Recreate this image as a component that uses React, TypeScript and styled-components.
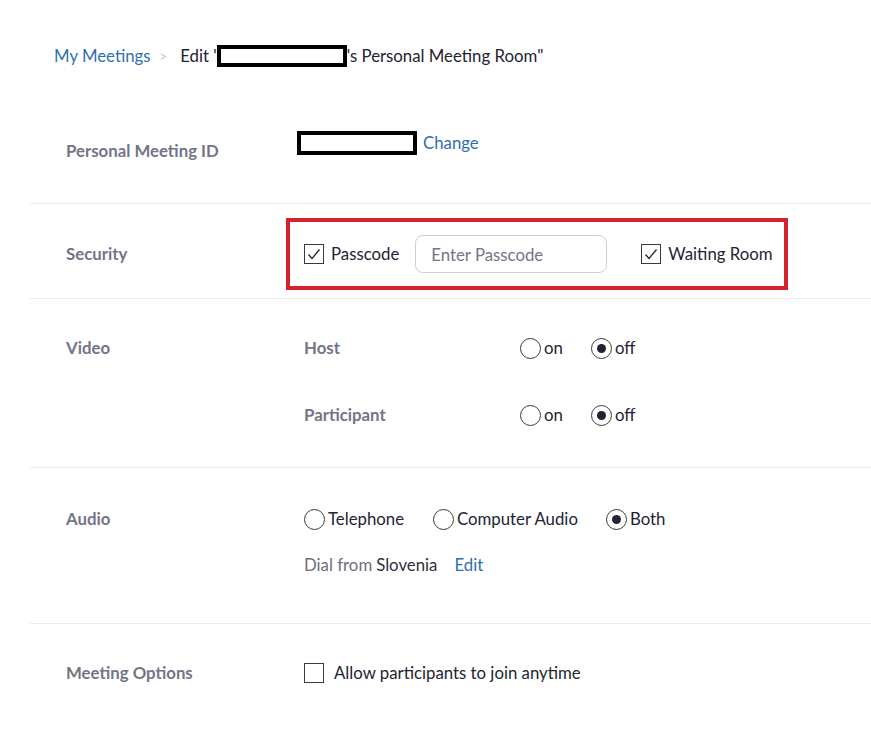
import React from "react";
import styled, { createGlobalStyle, css } from "styled-components";

const GlobalStyle = createGlobalStyle`
  html, body {
    margin: 0;
    padding: 0;
    background: #ffffff;
  }
  body {
    font-family: Lato, "Open Sans", "Liberation Sans", sans-serif;
    font-size: 16.8px;
    line-height: 24px;
    color: #232333;
  }
`;

const Page = styled.div`
  margin-left: 30px;
`;

const Breadcrumb = styled.div`
  display: flex;
  align-items: center;
  padding: 44px 0 32px 24px;
  height: 24px;
  color: #232333;
`;

const Link = styled.a`
  color: #2f6fae;
  text-decoration: none;
  cursor: pointer;
`;

const Crumb = styled.span`
  color: #c4c4cc;
  font-size: 13px;
  margin: 0 13px 0 9px;
`;

const Redacted = styled.span<{ w: number; h: number }>`
  display: inline-block;
  box-sizing: border-box;
  width: ${({ w }) => w}px;
  height: ${({ h }) => h}px;
  border: 4px solid #000;
  background: #fff;
`;

const Section = styled.div<{
  top: number;
  bottom: number;
  first?: boolean;
  center?: boolean;
}>`
  display: grid;
  grid-template-columns: 238px 1fr;
  align-items: ${({ center }) => (center ? "center" : "start")};
  padding: ${({ top, bottom }) => `${top}px 0 ${bottom}px 36px`};
  ${({ first }) =>
    !first &&
    css`
      border-top: 1px solid #ececec;
    `}
`;

const Label = styled.div<{ offset?: number }>`
  font-weight: 700;
  color: #747487;
  margin-top: ${({ offset }) => offset || 0}px;
`;

const Value = styled.div`
  display: flex;
  flex-direction: column;
`;

const Line = styled.div<{ gap?: number }>`
  display: flex;
  align-items: center;
  height: 24px;
  margin-top: ${({ gap }) => gap || 0}px;
`;

const IdLine = styled(Line)`
  margin-left: -7px;
  gap: 6px;
`;

const SecurityBox = styled.div`
  display: flex;
  align-items: center;
  box-sizing: border-box;
  width: 502px;
  height: 72px;
  margin-left: -18px;
  padding: 0 0 0 14px;
  border: 4px solid #d2232f;
`;

const CheckLabel = styled.label<{ gap?: number }>`
  display: flex;
  align-items: center;
  gap: ${({ gap }) => gap || 7}px;
  color: #232333;
`;

const Box = styled.span`
  display: inline-flex;
  align-items: center;
  justify-content: center;
  box-sizing: border-box;
  width: 20px;
  height: 20px;
  border: 1px solid #3a3a3a;
  background: #fff;
`;

const PassInput = styled.input`
  box-sizing: border-box;
  width: 192px;
  height: 38px;
  margin: 0 34px 0 16px;
  padding: 0 15px;
  border: 1px solid #cfcfd6;
  border-radius: 8px;
  font-family: inherit;
  font-size: 16.8px;
  color: #232333;
  outline: none;
  &::placeholder {
    color: #747487;
  }
`;

const SubLabel = styled.div`
  width: 216px;
  font-weight: 700;
  color: #747487;
`;

const RadioItem = styled.label<{ w?: number }>`
  display: flex;
  align-items: center;
  gap: 3px;
  width: ${({ w }) => (w ? `${w}px` : "auto")};
  color: #232333;
`;

const Circle = styled.span<{ checked?: boolean }>`
  position: relative;
  display: inline-block;
  box-sizing: border-box;
  width: 21px;
  height: 21px;
  border: 1px solid #3a3a3a;
  border-radius: 50%;
  background: #fff;
  ${({ checked }) =>
    checked &&
    css`
      &::after {
        content: "";
        position: absolute;
        left: 5px;
        top: 5px;
        width: 9px;
        height: 9px;
        border-radius: 50%;
        background: #232333;
      }
    `}
`;

const Dial = styled.div`
  color: #6e6e7e;
  display: flex;
  align-items: center;
  height: 24px;
  margin-top: 22px;
`;

const Country = styled.span`
  color: #2e2e3a;
  font-weight: 400;
  margin-left: 4px;
  margin-right: 17px;
`;

const Check = () => (
  <svg width="14" height="12" viewBox="0 0 14 12">
    <path d="M1.5 6.5 L5 10.5 L12.5 1.5" fill="none" stroke="#232333" strokeWidth="1.3" />
  </svg>
);

const CheckBox = ({ checked }: { checked?: boolean }) => (
  <Box>{checked ? <Check /> : null}</Box>
);

const Radio = ({
  checked,
  text,
  w,
}: {
  checked?: boolean;
  text: string;
  w?: number;
}) => (
  <RadioItem w={w}>
    <Circle checked={checked} />
    {text}
  </RadioItem>
);

const App = () => {
  return (
    <Page>
      <GlobalStyle />
      <Breadcrumb>
        <Link>My Meetings</Link>
        <Crumb>&gt;</Crumb>
        <span>Edit '</span>
        <Redacted w={130} h={22} />
        <span>'s Personal Meeting Room"</span>
      </Breadcrumb>

      <Section first top={31} bottom={40}>
        <Label offset={8}>Personal Meeting ID</Label>
        <Value>
          <IdLine>
            <Redacted w={120} h={24} />
            <Link>Change</Link>
          </IdLine>
        </Value>
      </Section>

      <Section center top={14} bottom={8}>
        <Label>Security</Label>
        <SecurityBox>
          <CheckLabel>
            <CheckBox checked />
            Passcode
          </CheckLabel>
          <PassInput placeholder="Enter Passcode" />
          <CheckLabel>
            <CheckBox checked />
            Waiting Room
          </CheckLabel>
        </SecurityBox>
      </Section>

      <Section top={37} bottom={40}>
        <Label>Video</Label>
        <Value>
          <Line>
            <SubLabel>Host</SubLabel>
            <Radio text="on" w={71} />
            <Radio text="off" checked />
          </Line>
          <Line gap={43}>
            <SubLabel>Participant</SubLabel>
            <Radio text="on" w={71} />
            <Radio text="off" checked />
          </Line>
        </Value>
      </Section>

      <Section top={39} bottom={46}>
        <Label>Audio</Label>
        <Value>
          <Line>
            <Radio text="Telephone" w={129} />
            <Radio text="Computer Audio" w={173} />
            <Radio text="Both" checked />
          </Line>
          <Dial>
            Dial from
            <Country>Slovenia</Country>
            <Link>Edit</Link>
          </Dial>
        </Value>
      </Section>

      <Section top={37} bottom={40}>
        <Label>Meeting Options</Label>
        <Value>
          <Line>
            <CheckLabel gap={10}>
              <CheckBox />
              Allow participants to join anytime
            </CheckLabel>
          </Line>
        </Value>
      </Section>
    </Page>
  );
};

export default App;
